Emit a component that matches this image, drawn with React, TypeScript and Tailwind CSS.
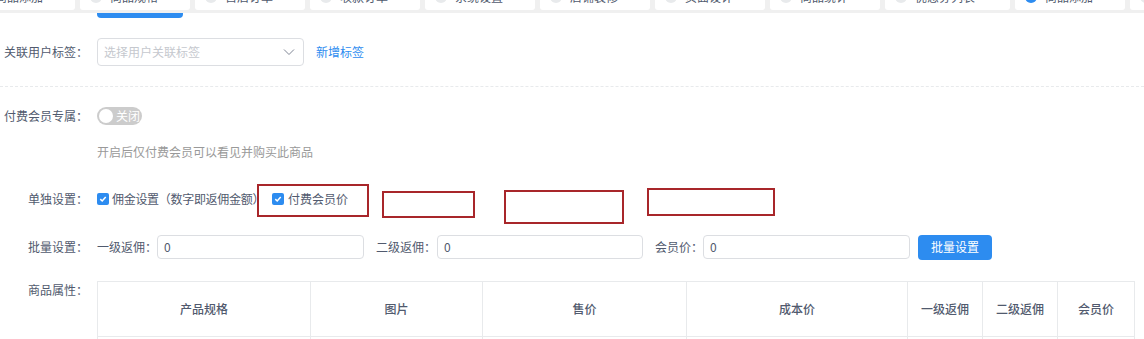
import React from "react";

const tabs = [
  { t: "商品添加", wide: false, active: false },
  { t: "商品规格", wide: false, active: false },
  { t: "售后订单", wide: false, active: false },
  { t: "收款订单", wide: false, active: false },
  { t: "系统设置", wide: false, active: false },
  { t: "店铺装修", wide: false, active: false },
  { t: "页面设计", wide: false, active: false },
  { t: "商品统计", wide: false, active: false },
  { t: "优惠券列表", wide: true, active: false },
  { t: "商品添加", wide: false, active: true },
  { t: "商品列表", wide: false, active: false },
];

function Check() {
  return (
    <span className="w-[12px] h-[12px] rounded-[2px] bg-[#2d8cf0] flex items-center justify-center shrink-0">
      <svg width="8" height="8" viewBox="0 0 8 8">
        <path d="M1.3 4.1 L3.2 6 L6.7 2" stroke="#fff" strokeWidth="1.5" fill="none" />
      </svg>
    </span>
  );
}

function Label({ children }: { children: React.ReactNode }) {
  return <div className="w-[88px] shrink-0 text-right text-[12px] text-[#515a6e] leading-[18px]">{children}</div>;
}

export default function App() {
  const cols = [
    { t: "产品规格", w: "w-[213px]" },
    { t: "图片", w: "w-[172px]" },
    { t: "售价", w: "w-[204px]" },
    { t: "成本价", w: "w-[221px]" },
    { t: "一级返佣", w: "w-[75px]" },
    { t: "二级返佣", w: "w-[75px]" },
    { t: "会员价", w: "w-[77px]" },
  ];
  return (
    <div
      className="w-[1144px] h-[339px] overflow-hidden bg-white relative"
      style={{ fontFamily: '"Noto Sans CJK SC", "Noto Sans", sans-serif' }}
    >
      {/* tags bar */}
      <div className="h-[13px] bg-[#f0f0f0] overflow-hidden">
        <div className="flex gap-[5px] mt-[-16px] ml-[-35px]">
          {tabs.map((tab, i) => (
            <div
              key={i}
              className={
                "h-[26px] bg-white rounded-[3px] flex items-center shrink-0 " +
                (tab.wide ? "w-[125px]" : "w-[110px]")
              }
            >
              <span
                className={
                  "ml-[10px] w-[12px] h-[12px] rounded-full shrink-0 " +
                  (tab.active ? "bg-[#2d8cf0]" : "bg-[#e8eaec]")
                }
              />
              <span className="ml-[8px] text-[12px] text-[#515a6e] whitespace-nowrap">{tab.t}</span>
              <svg className="ml-auto mr-[12px]" width="8" height="8" viewBox="0 0 8 8">
                <path d="M1 1 L7 7 M7 1 L1 7" stroke="#c5c8ce" strokeWidth="1" />
              </svg>
            </div>
          ))}
        </div>
      </div>
      <div className="ml-[97px] w-[86px] h-[5px] bg-[#2d8cf0] rounded-b-[4px]" />

      {/* 关联用户标签 */}
      <div className="flex items-center h-[28px] mt-[20px]">
        <Label>关联用户标签：</Label>
        <div className="ml-[9px] w-[207px] h-[28px] border border-[#dcdee2] rounded-[4px] flex items-center px-[6px]">
          <span className="text-[12px] text-[#c5c8ce]">选择用户关联标签</span>
          <svg className="ml-auto mr-[2px]" width="12" height="8" viewBox="0 0 12 8">
            <path d="M1 1.5 L6 6.5 L11 1.5" stroke="#808695" strokeWidth="1" fill="none" />
          </svg>
        </div>
        <span className="ml-[12px] text-[12px] text-[#2d8cf0]">新增标签</span>
      </div>

      <div className="mt-[20px] border-t border-dashed border-[#e8eaec]" />

      {/* 付费会员专属 */}
      <div className="flex items-center h-[18px] mt-[20px]">
        <Label>付费会员专属：</Label>
        <div className="ml-[9px] w-[45px] h-[18px] rounded-full bg-[#ccc] flex items-center px-[2px]">
          <span className="w-[14px] h-[14px] rounded-full bg-white shrink-0" />
          <span className="ml-[3px] text-[12px] leading-none text-white">关闭</span>
        </div>
      </div>
      <div className="ml-[97px] mt-[18px] text-[12px] leading-[18px] text-[#999]">开启后仅付费会员可以看见并购买此商品</div>

      {/* 单独设置 */}
      <div className="flex items-center h-[18px] mt-[29px]">
        <Label>单独设置：</Label>
        <div className="ml-[9px] flex items-center">
          <Check />
          <span className="ml-[3px] text-[12px] text-[#515a6e] tracking-[-0.3px]">佣金设置（数字即返佣金额）</span>
        </div>
        <div className="ml-[8px] flex items-center">
          <Check />
          <span className="ml-[4px] text-[12px] text-[#515a6e]">付费会员价</span>
        </div>
      </div>

      {/* 批量设置 */}
      <div className="flex items-center h-[24px] mt-[27px]">
        <Label>批量设置：</Label>
        <span className="ml-[9px] w-[60px] text-[12px] text-[#515a6e]">一级返佣：</span>
        <div className="w-[207px] h-[24px] border border-[#dcdee2] rounded-[4px] flex items-center px-[6px] text-[12px] text-[#515a6e]">0</div>
        <span className="ml-[12px] w-[61px] text-[12px] text-[#515a6e]">二级返佣：</span>
        <div className="w-[206px] h-[24px] border border-[#dcdee2] rounded-[4px] flex items-center px-[6px] text-[12px] text-[#515a6e]">0</div>
        <span className="ml-[12px] w-[48px] text-[12px] text-[#515a6e]">会员价：</span>
        <div className="w-[207px] h-[24px] border border-[#dcdee2] rounded-[4px] flex items-center px-[6px] text-[12px] text-[#515a6e]">0</div>
        <div className="ml-[8px] w-[74px] h-[25px] rounded-[4px] bg-[#2d8cf0] flex items-center justify-center text-[12px] text-white">批量设置</div>
      </div>

      {/* 商品属性 */}
      <div className="flex items-start mt-[22px]">
        <Label>商品属性：</Label>
        <div className="ml-[9px] border-t border-l border-[#e8eaec]">
          <div className="flex h-[55px]">
            {cols.map((c, i) => (
              <div
                key={i}
                className={c.w + " shrink-0 border-r border-b border-[#e8eaec] flex items-center justify-center text-[12px] font-medium text-[#515a6e]"}
              >
                {c.t}
              </div>
            ))}
          </div>
          <div className="flex h-[40px]">
            {cols.map((c, i) => (
              <div key={i} className={c.w + " shrink-0 border-r border-[#e8eaec]"} />
            ))}
          </div>
        </div>
      </div>

      {/* red annotation boxes */}
      <div className="absolute left-[257px] top-[184px] w-[112px] h-[33px] border-2 border-[#a8262a]" />
      <div className="absolute left-[382px] top-[191px] w-[93px] h-[27px] border-2 border-[#a8262a]" />
      <div className="absolute left-[504px] top-[190px] w-[120px] h-[34px] border-2 border-[#a8262a]" />
      <div className="absolute left-[647px] top-[188px] w-[128px] h-[28px] border-2 border-[#a8262a]" />
    </div>
  );
}
